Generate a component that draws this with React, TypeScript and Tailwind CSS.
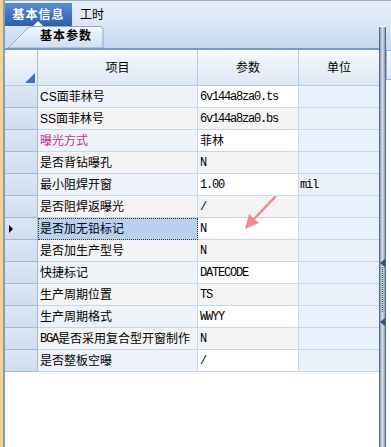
const rows = [
  { label: 'CS面菲林号', value: '6v144a8za0.ts' },
  { label: 'SS面菲林号', value: '6v144a8za0.bs' },
  { label: '曝光方式', value: '菲林', purple: true, cjk: true },
  { label: '是否背钻曝孔', value: 'N' },
  { label: '最小阻焊开窗', value: '1.00', unit: 'mil' },
  { label: '是否阻焊返曝光', value: '/' },
  { label: '是否加无铅标记', value: 'N', selected: true },
  { label: '是否加生产型号', value: 'N' },
  { label: '快捷标记', value: 'DATECODE' },
  { label: '生产周期位置', value: 'TS' },
  { label: '生产周期格式', value: 'WWYY' },
  { label: '是否采用复合型开窗制作', prefix: 'BGA', value: 'N' },
  { label: '是否整板空曝', value: '/' },
];

const mono = "font-['Liberation_Mono',monospace] text-[12px] tracking-[-1.2px]";

function ParamTab() {
  return (
    <div className="relative w-[98px] h-[22px] ml-[3px] self-end shrink-0">
      <svg className="absolute inset-0" width="98" height="22" viewBox="0 0 98 22">
        <defs>
          <linearGradient id="tabg" x1="0" y1="0" x2="0" y2="1">
            <stop offset="0" stopColor="#f4f8fd" />
            <stop offset="1" stopColor="#cfdef2" />
          </linearGradient>
        </defs>
        <path d="M0 22 L20 2 Q22 0.5 25 0.5 L92 0.5 Q95 0.5 95 3.5 L95 22 Z" fill="url(#tabg)" stroke="#8ea9cd" strokeWidth="1" />
      </svg>
      <span className="absolute left-[32px] top-[4px] text-[12px] tracking-[1px] font-bold leading-none text-black">基本参数</span>
    </div>
  );
}

function Splitter() {
  return (
    <div className="relative w-[7px] shrink-0 mt-[1px] border-x border-[#506b93] bg-gradient-to-r from-[#8d9db5] via-[#d7dde6] to-[#8a9bb3]">
      <div className="absolute left-[0px] top-[232px] w-0 h-0 border-y-[4px] border-y-transparent border-r-[5px] border-r-[#2f4f80]" />
      <div className="absolute left-[2px] top-[240px] h-[45px] border-l border-dotted border-[#2f4f80]" />
      <div className="absolute left-[0px] top-[291px] w-0 h-0 border-y-[4px] border-y-transparent border-r-[5px] border-r-[#2f4f80]" />
    </div>
  );
}

export default function App() {
  return (
    <div className="w-[391px] h-[447px] flex overflow-hidden bg-white font-['Liberation_Sans','Noto_Sans_CJK_SC',sans-serif] text-black">
      <div className="w-[3px] shrink-0 bg-[#f2d48c]" />
      <div className="w-[2px] shrink-0 bg-[#7f9dc6]" />
      <div className="w-[386px] shrink-0 flex flex-col">
        {/* top tabs */}
        <div className="h-[26px] shrink-0 flex items-end border-t border-[#9fb2cc] bg-gradient-to-b from-[#e6edf7] to-[#dbe5f3]">
          <div className="relative h-[23px] w-[67px] shrink-0 flex items-center justify-center bg-gradient-to-b from-[#5a8dd4] to-[#2d5fab] text-white text-[12px] tracking-[1px] font-bold leading-none">
            基本信息
            <div className="absolute left-[28px] bottom-0 w-0 h-0 border-x-[5px] border-x-transparent border-b-[5px] border-b-white" />
          </div>
          <div className="h-[23px] flex items-center pl-[8px] text-[12px] leading-none">工时</div>
        </div>
        <div className="flex-1 flex">
          {/* left panel */}
          <div className="w-[374px] shrink-0 flex flex-col">
            <div className="h-[24px] shrink-0 flex bg-gradient-to-b from-[#d9e5f5] to-[#c6d8ef] border-b-2 border-[#7899c6]">
              <ParamTab />
            </div>
            {/* header */}
            <div className="flex h-[36px] shrink-0 border-b border-[#b6c9e2] bg-gradient-to-b from-[#f6f9fd] to-[#dde7f4] text-[12px]">
              <div className="relative w-[33px] shrink-0 border-r border-[#a7bcd8]">
                <svg className="absolute right-[2px] bottom-[2px]" width="10" height="10" viewBox="0 0 10 10">
                  <path d="M10 0 L10 10 L0 10 Z" fill="#3d6fb8" />
                </svg>
              </div>
              <div className="w-[160px] shrink-0 flex items-center justify-center border-r border-[#b6c9e2]">项目</div>
              <div className="w-[101px] shrink-0 flex items-center justify-center border-r border-[#b6c9e2]">参数</div>
              <div className="w-[80px] shrink-0 flex items-center justify-center">单位</div>
            </div>
            {/* rows */}
            <div className="relative">
              {rows.map((r, i) => {
                const even = i % 2 === 0;
                return (
                  <div key={i} className="flex h-[22px] text-[12px] leading-none">
                    <div className="w-[33px] shrink-0 flex items-center pl-[4px] bg-gradient-to-b from-[#dde7f4] to-[#d0ddee] border-r border-b border-[#a3b9d6]">
                      {r.selected && (
                        <div className="w-0 h-0 border-y-[4px] border-y-transparent border-l-[4px] border-l-black" />
                      )}
                    </div>
                    <div
                      className={
                        'w-[160px] shrink-0 flex items-center pl-[2px] border-r border-b whitespace-nowrap overflow-hidden ' +
                        (r.selected
                          ? 'bg-[#b9d1ef] border-[#c6d6ea] outline-1 outline-dotted outline-offset-[-1px] outline-[#333]'
                          : even
                          ? 'bg-[#eef3fa] border-[#c6d6ea]'
                          : 'bg-[#f4f4f4] border-[#c6d6ea]') +
                        (r.purple ? ' text-[#b8348f]' : '')
                      }
                    >
                      {r.prefix && <span className={mono}>{r.prefix}</span>}
                      {r.label}
                    </div>
                    <div
                      className={
                        'w-[101px] shrink-0 flex items-center pl-[2px] border-r border-b border-[#c6d6ea] ' +
                        (even ? 'bg-white' : 'bg-[#f4f4f4]')
                      }
                    >
                      <span className={r.cjk ? 'text-[12px]' : mono}>{r.value}</span>
                    </div>
                    <div className="w-[80px] shrink-0 flex items-center pl-[1px] border-b border-[#c6d6ea] bg-[#e9f1fb]">
                      {r.unit && <span className={mono}>{r.unit}</span>}
                    </div>
                  </div>
                );
              })}
              <svg className="absolute left-[230px] top-[108px] pointer-events-none" width="44" height="40" viewBox="0 0 44 40">
                <line x1="40" y1="3" x2="18" y2="26" stroke="#f28a8f" strokeWidth="2.5" strokeLinecap="round" />
                <path d="M10 35 L14 20 L24 29 Z" fill="#f28a8f" />
              </svg>
            </div>
          </div>
          <Splitter />
          {/* partial right panel */}
          <div className="w-[5px] shrink-0 flex flex-col overflow-hidden">
            <div className="h-[24px] shrink-0 bg-gradient-to-b from-[#d9e5f5] to-[#c6d8ef]" />
            <div className="h-[30px] shrink-0 border-y border-l border-[#9fb6d3] bg-gradient-to-b from-[#f6f9fd] to-[#dde7f4]" />
          </div>
        </div>
      </div>
    </div>
  );
}
